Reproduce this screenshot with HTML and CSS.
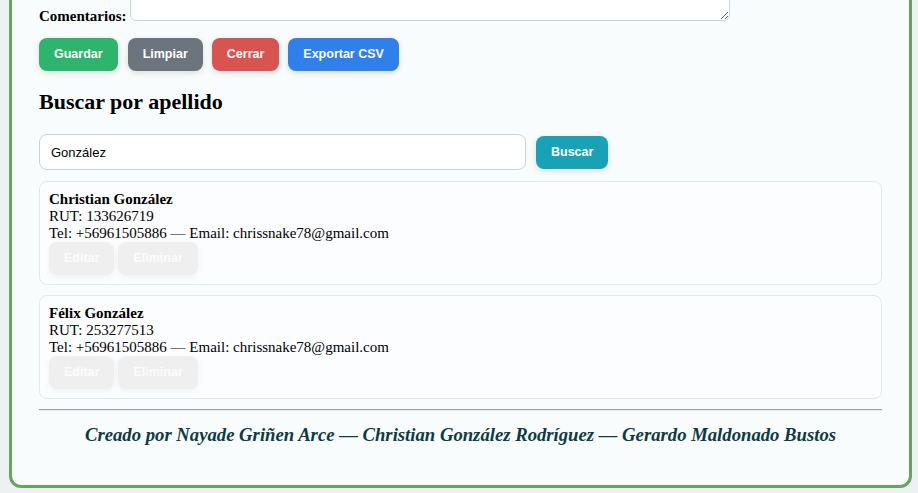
FILE: index.html
```html
<!DOCTYPE html>
<html lang="es">
<head>
<meta charset="utf-8">
<title>Registro</title>
<link rel="stylesheet" href="styles.css">
</head>
<body>
<div class="container">
  <div class="field-row">
    <label class="field-label" for="comentarios">Comentarios:</label>
    <textarea id="comentarios" class="field-textarea"></textarea>
  </div>
  <div class="actions">
    <button class="btn btn-green">Guardar</button>
    <button class="btn btn-gray">Limpiar</button>
    <button class="btn btn-red">Cerrar</button>
    <button class="btn btn-blue">Exportar CSV</button>
  </div>

  <h2 class="section-title">Buscar por apellido</h2>
  <div class="search-row">
    <input class="search-input" type="text" value="González">
    <button class="btn btn-teal">Buscar</button>
  </div>

  <div class="results">
    <div class="card">
      <div class="card-name">Christian González</div>
      <div class="card-line">RUT: 133626719</div>
      <div class="card-line">Tel: +56961505886 — Email: chrissnake78@gmail.com</div>
      <div class="card-actions">
        <button class="btn btn-ghost">Editar</button>
        <button class="btn btn-ghost">Eliminar</button>
      </div>
    </div>
    <div class="card">
      <div class="card-name">Félix González</div>
      <div class="card-line">RUT: 253277513</div>
      <div class="card-line">Tel: +56961505886 — Email: chrissnake78@gmail.com</div>
      <div class="card-actions">
        <button class="btn btn-ghost">Editar</button>
        <button class="btn btn-ghost">Eliminar</button>
      </div>
    </div>
  </div>

  <hr class="divider">
  <p class="footer">Creado por Nayade Griñen Arce — Christian González Rodríguez — Gerardo Maldonado Bustos</p>
</div>
</body>
</html>
```

FILE: styles.css
```css
html {
  background: #eef1f4;
}
body {
  margin: 0;
  font-family: "Liberation Serif", "Times New Roman", serif;
  color: #000;
}
.container {
  margin: -72px 6px 5px 9px;
  border: 3px solid #62a858;
  border-radius: 12px;
  background: #f9fcfd;
  padding: 20px 27px 40px;
}
.field-row {
  display: flex;
  align-items: flex-end;
}
.field-label {
  font-weight: bold;
  font-size: 15px;
  line-height: 17px;
  margin-right: 4px;
  margin-bottom: -4px;
}
.field-textarea {
  box-sizing: border-box;
  width: 600px;
  height: 70px;
  margin: 0;
  border: 1px solid #c9d3da;
  border-radius: 6px;
  background: #fff;
  display: block;
}
.actions {
  display: flex;
  gap: 9px;
  margin-top: 17px;
}
.actions .btn:first-child {
  margin-right: 1px;
}
.btn {
  font-family: "Liberation Sans", Arial, sans-serif;
  font-weight: bold;
  font-size: 12.5px;
  line-height: 15px;
  color: #fff;
  border: none;
  border-radius: 8px;
  padding: 9px 15px;
  box-shadow: 0 2px 6px rgba(0, 0, 0, 0.12);
  margin: 0;
}
.btn-green { background: #2db56d; }
.btn-gray { background: #6c757d; }
.btn-red { background: #d9534f; }
.btn-blue { background: #2f80ed; }
.btn-teal { background: #17a2b8; }
.btn-ghost {
  background: #efefef;
  color: #fbfbfb;
  box-shadow: 0 2px 6px rgba(0, 0, 0, 0.05);
}
.section-title {
  font-size: 22px;
  line-height: 25px;
  font-weight: bold;
  margin: 18px 0 0;
}
.search-row {
  display: flex;
  align-items: center;
  gap: 10px;
  margin-top: 20px;
}
.search-input {
  box-sizing: border-box;
  width: 487px;
  height: 36px;
  margin: 0;
  border: 1px solid #c9d3da;
  border-radius: 8px;
  background: #fff;
  padding: 0 11px;
  font-family: "Liberation Sans", Arial, sans-serif;
  font-size: 13px;
  color: #000;
}
.results {
  display: flex;
  flex-direction: column;
  gap: 10px;
  margin-top: 11px;
}
.card {
  border: 1px solid #e2e9ee;
  border-radius: 8px;
  background: #fcfdfe;
  padding: 9px;
  font-size: 15px;
  line-height: 17px;
}
.card-name {
  font-weight: bold;
}
.card-actions {
  display: flex;
  gap: 4px;
}
.divider {
  border: 0;
  border-top: 1px solid #9e9e9e;
  border-bottom: 1px solid #eceff1;
  height: 0;
  margin: 10px 0 0;
}
.footer {
  margin: 13px 0 0;
  text-align: center;
  font-style: italic;
  font-weight: bold;
  font-size: 18.7px;
  line-height: 21px;
  color: #0d3b43;
}
```
